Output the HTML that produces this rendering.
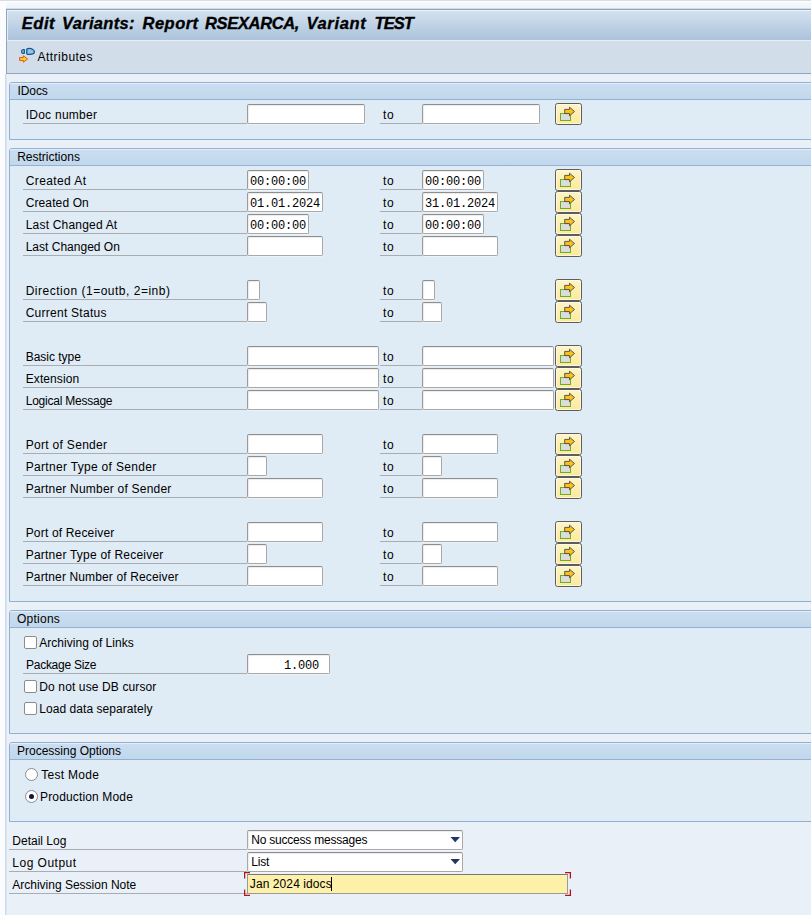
<!DOCTYPE html>
<html lang="en"><head><meta charset="utf-8"><title>Edit Variants: Report RSEXARCA, Variant TEST</title>
<style>
html,body{margin:0;padding:0}
body{width:811px;height:915px;position:relative;overflow:hidden;background:#e9f0f7;font:12px "Liberation Sans", sans-serif;color:#000}
div{box-sizing:border-box}
.abs,.t,.ul,.in,.mb,.cb,.rb,.gb,.dd{position:absolute}
.t{white-space:pre;line-height:22px;height:22px;color:#000}
.tt{font:italic bold 16.5px/22px "Liberation Sans", sans-serif;-webkit-text-stroke:0.35px #000}
.ul{height:1px;background:#a9adb3}
.in{height:20px;background:#fff;border:1px solid #a8a8a8;border-top-color:#8e8e8e;border-left-color:#999;border-radius:2px;font:12px "Liberation Mono", monospace;letter-spacing:-0.2px;line-height:18px;padding:2px 0 0 2px;white-space:pre;box-shadow:0 1px 0 #eef3f8, inset 1px 1px 1px #ebebeb;color:#000;overflow:hidden}
.mb{width:27px;height:22px;border:1px solid #5c5c63;border-radius:2.500px;background:linear-gradient(#fdf4c8,#fde99b);box-shadow:inset 0 0 0 1px rgba(255,252,232,.7)}
.mb svg{position:absolute;left:-1px;top:-1px}
.cb{width:13px;height:13px;background:#fff;border:1px solid #8c8c8c;border-radius:2px}
.rb{width:13px;height:13px;background:#fff;border:1px solid #8c8c8c;border-radius:50%}
.rb i{position:absolute;left:3px;top:3px;width:5px;height:5px;border-radius:50%;background:#15153f}
.gb{left:9px;width:820px;border:1px solid #8fb0d2;border-radius:3px 0 0 0;background:#dfebf5}
.gh{position:absolute;left:0;top:0;right:0;height:17px;border-top:1px solid #e6eff8;border-bottom:1px solid #94b1d1;background:linear-gradient(#cbdef0,#c1d7ec);border-radius:2px 0 0 0}
.dd{height:20px;background:#fff;border:1px solid #a8a8a8;border-top-color:#8e8e8e;border-radius:2px;box-shadow:0 1px 0 #f2f6fa, inset 1px 1px 1px #ebebeb}
</style></head><body>


<!-- outer frame -->
<div class="abs" style="left:0;top:0;width:811px;height:9px;background:linear-gradient(#fafbfd,#eef2f8)"></div>
<div class="abs" style="left:0;top:1px;width:811px;height:1px;background:#fdfdfe"></div>
<div class="abs" style="left:6px;top:8px;width:805px;height:1px;background:#d3dbe7"></div>
<div class="abs" style="left:0;top:0;width:6px;height:915px;background:#fbfcfd"></div>
<div class="abs" style="left:0;top:0;width:811px;height:1px;background:#d8dde5"></div>
<div class="abs" style="left:5px;top:74px;width:1px;height:841px;background:#cdd8e6"></div>
<div class="abs" style="left:6px;top:74px;width:1px;height:841px;background:#e0e8f1"></div>
<!-- title -->
<div class="abs" style="left:6px;top:9px;width:820px;height:65px;border:1px solid #8fa4be;background:#d1dee9"></div>
<div class="abs" style="left:7px;top:10px;width:820px;height:30px;border-top:1px solid #eaf1f8;border-left:1px solid #e3ecf5;background:linear-gradient(#d3e1ee,#abc3dc)"></div>
<div class="abs" style="left:7px;top:40px;width:820px;height:1px;background:#e6eef6"></div>
<div class="gb" style="top:82px;height:58px"><div class="gh"></div></div><div class="gb" style="top:148px;height:454px"><div class="gh"></div></div><div class="gb" style="top:610px;height:124px"><div class="gh"></div></div><div class="gb" style="top:742px;height:80px"><div class="gh"></div></div>
<div class="ul" style="left:23px;top:123px;width:224px"></div><div class="ul" style="left:380px;top:123px;width:42px"></div><div class="ul" style="left:23px;top:189px;width:224px"></div><div class="ul" style="left:380px;top:189px;width:42px"></div><div class="ul" style="left:23px;top:211px;width:224px"></div><div class="ul" style="left:380px;top:211px;width:42px"></div><div class="ul" style="left:23px;top:233px;width:224px"></div><div class="ul" style="left:380px;top:233px;width:42px"></div><div class="ul" style="left:23px;top:255px;width:224px"></div><div class="ul" style="left:380px;top:255px;width:42px"></div><div class="ul" style="left:23px;top:299px;width:224px"></div><div class="ul" style="left:380px;top:299px;width:42px"></div><div class="ul" style="left:23px;top:321px;width:224px"></div><div class="ul" style="left:380px;top:321px;width:42px"></div><div class="ul" style="left:23px;top:365px;width:224px"></div><div class="ul" style="left:380px;top:365px;width:42px"></div><div class="ul" style="left:23px;top:387px;width:224px"></div><div class="ul" style="left:380px;top:387px;width:42px"></div><div class="ul" style="left:23px;top:409px;width:224px"></div><div class="ul" style="left:380px;top:409px;width:42px"></div><div class="ul" style="left:23px;top:453px;width:224px"></div><div class="ul" style="left:380px;top:453px;width:42px"></div><div class="ul" style="left:23px;top:475px;width:224px"></div><div class="ul" style="left:380px;top:475px;width:42px"></div><div class="ul" style="left:23px;top:497px;width:224px"></div><div class="ul" style="left:380px;top:497px;width:42px"></div><div class="ul" style="left:23px;top:541px;width:224px"></div><div class="ul" style="left:380px;top:541px;width:42px"></div><div class="ul" style="left:23px;top:563px;width:224px"></div><div class="ul" style="left:380px;top:563px;width:42px"></div><div class="ul" style="left:23px;top:585px;width:224px"></div><div class="ul" style="left:380px;top:585px;width:42px"></div><div class="ul" style="left:23px;top:673px;width:224px"></div><div class="ul" style="left:9px;top:849px;width:238px"></div><div class="ul" style="left:9px;top:871px;width:238px"></div><div class="ul" style="left:9px;top:893px;width:238px"></div>
<div class="in" style="left:247px;top:104px;width:118px"></div><div class="in" style="left:422px;top:104px;width:118px"></div><div class="in" style="left:247px;top:170px;width:62px">00:00:00</div><div class="in" style="left:422px;top:170px;width:62px">00:00:00</div><div class="in" style="left:247px;top:192px;width:76px">01.01.2024</div><div class="in" style="left:422px;top:192px;width:76px">31.01.2024</div><div class="in" style="left:247px;top:214px;width:62px">00:00:00</div><div class="in" style="left:422px;top:214px;width:62px">00:00:00</div><div class="in" style="left:247px;top:236px;width:76px"></div><div class="in" style="left:422px;top:236px;width:76px"></div><div class="in" style="left:247px;top:280px;width:13px"></div><div class="in" style="left:422px;top:280px;width:13px"></div><div class="in" style="left:247px;top:302px;width:20px"></div><div class="in" style="left:422px;top:302px;width:20px"></div><div class="in" style="left:247px;top:346px;width:132px"></div><div class="in" style="left:422px;top:346px;width:132px"></div><div class="in" style="left:247px;top:368px;width:132px"></div><div class="in" style="left:422px;top:368px;width:132px"></div><div class="in" style="left:247px;top:390px;width:132px"></div><div class="in" style="left:422px;top:390px;width:132px"></div><div class="in" style="left:247px;top:434px;width:76px"></div><div class="in" style="left:422px;top:434px;width:76px"></div><div class="in" style="left:247px;top:456px;width:20px"></div><div class="in" style="left:422px;top:456px;width:20px"></div><div class="in" style="left:247px;top:478px;width:76px"></div><div class="in" style="left:422px;top:478px;width:76px"></div><div class="in" style="left:247px;top:522px;width:76px"></div><div class="in" style="left:422px;top:522px;width:76px"></div><div class="in" style="left:247px;top:544px;width:20px"></div><div class="in" style="left:422px;top:544px;width:20px"></div><div class="in" style="left:247px;top:566px;width:76px"></div><div class="in" style="left:422px;top:566px;width:76px"></div><div class="in" style="left:247px;top:654px;width:83px;text-align:right;padding-right:10px">1.000</div>
<div class="mb" style="left:555px;top:103px"><svg width="27" height="22" viewBox="0 0 27 22"><rect x="5.5" y="10.5" width="10" height="7" fill="#dcdcdc" stroke="#6ab023"/><path d="M9.700 6.400h4.800v-2.200l5 4.300-5 4.300v-2.200h-4.800z" fill="#fdbf12" stroke="#4a4a52" stroke-width=".9" stroke-linejoin="round"/></svg></div><div class="mb" style="left:555px;top:169px"><svg width="27" height="22" viewBox="0 0 27 22"><rect x="5.5" y="10.5" width="10" height="7" fill="#dcdcdc" stroke="#6ab023"/><path d="M9.700 6.400h4.800v-2.200l5 4.300-5 4.300v-2.200h-4.800z" fill="#fdbf12" stroke="#4a4a52" stroke-width=".9" stroke-linejoin="round"/></svg></div><div class="mb" style="left:555px;top:191px"><svg width="27" height="22" viewBox="0 0 27 22"><rect x="5.5" y="10.5" width="10" height="7" fill="#dcdcdc" stroke="#6ab023"/><path d="M9.700 6.400h4.800v-2.200l5 4.300-5 4.300v-2.200h-4.800z" fill="#fdbf12" stroke="#4a4a52" stroke-width=".9" stroke-linejoin="round"/></svg></div><div class="mb" style="left:555px;top:213px"><svg width="27" height="22" viewBox="0 0 27 22"><rect x="5.5" y="10.5" width="10" height="7" fill="#dcdcdc" stroke="#6ab023"/><path d="M9.700 6.400h4.800v-2.200l5 4.300-5 4.300v-2.200h-4.800z" fill="#fdbf12" stroke="#4a4a52" stroke-width=".9" stroke-linejoin="round"/></svg></div><div class="mb" style="left:555px;top:235px"><svg width="27" height="22" viewBox="0 0 27 22"><rect x="5.5" y="10.5" width="10" height="7" fill="#dcdcdc" stroke="#6ab023"/><path d="M9.700 6.400h4.800v-2.200l5 4.300-5 4.300v-2.200h-4.800z" fill="#fdbf12" stroke="#4a4a52" stroke-width=".9" stroke-linejoin="round"/></svg></div><div class="mb" style="left:555px;top:279px"><svg width="27" height="22" viewBox="0 0 27 22"><rect x="5.5" y="10.5" width="10" height="7" fill="#dcdcdc" stroke="#6ab023"/><path d="M9.700 6.400h4.800v-2.200l5 4.300-5 4.300v-2.200h-4.800z" fill="#fdbf12" stroke="#4a4a52" stroke-width=".9" stroke-linejoin="round"/></svg></div><div class="mb" style="left:555px;top:301px"><svg width="27" height="22" viewBox="0 0 27 22"><rect x="5.5" y="10.5" width="10" height="7" fill="#dcdcdc" stroke="#6ab023"/><path d="M9.700 6.400h4.800v-2.200l5 4.300-5 4.300v-2.200h-4.800z" fill="#fdbf12" stroke="#4a4a52" stroke-width=".9" stroke-linejoin="round"/></svg></div><div class="mb" style="left:555px;top:345px"><svg width="27" height="22" viewBox="0 0 27 22"><rect x="5.5" y="10.5" width="10" height="7" fill="#dcdcdc" stroke="#6ab023"/><path d="M9.700 6.400h4.800v-2.200l5 4.300-5 4.300v-2.200h-4.800z" fill="#fdbf12" stroke="#4a4a52" stroke-width=".9" stroke-linejoin="round"/></svg></div><div class="mb" style="left:555px;top:367px"><svg width="27" height="22" viewBox="0 0 27 22"><rect x="5.5" y="10.5" width="10" height="7" fill="#dcdcdc" stroke="#6ab023"/><path d="M9.700 6.400h4.800v-2.200l5 4.300-5 4.300v-2.200h-4.800z" fill="#fdbf12" stroke="#4a4a52" stroke-width=".9" stroke-linejoin="round"/></svg></div><div class="mb" style="left:555px;top:389px"><svg width="27" height="22" viewBox="0 0 27 22"><rect x="5.5" y="10.5" width="10" height="7" fill="#dcdcdc" stroke="#6ab023"/><path d="M9.700 6.400h4.800v-2.200l5 4.300-5 4.300v-2.200h-4.800z" fill="#fdbf12" stroke="#4a4a52" stroke-width=".9" stroke-linejoin="round"/></svg></div><div class="mb" style="left:555px;top:433px"><svg width="27" height="22" viewBox="0 0 27 22"><rect x="5.5" y="10.5" width="10" height="7" fill="#dcdcdc" stroke="#6ab023"/><path d="M9.700 6.400h4.800v-2.200l5 4.300-5 4.300v-2.200h-4.800z" fill="#fdbf12" stroke="#4a4a52" stroke-width=".9" stroke-linejoin="round"/></svg></div><div class="mb" style="left:555px;top:455px"><svg width="27" height="22" viewBox="0 0 27 22"><rect x="5.5" y="10.5" width="10" height="7" fill="#dcdcdc" stroke="#6ab023"/><path d="M9.700 6.400h4.800v-2.200l5 4.300-5 4.300v-2.200h-4.800z" fill="#fdbf12" stroke="#4a4a52" stroke-width=".9" stroke-linejoin="round"/></svg></div><div class="mb" style="left:555px;top:477px"><svg width="27" height="22" viewBox="0 0 27 22"><rect x="5.5" y="10.5" width="10" height="7" fill="#dcdcdc" stroke="#6ab023"/><path d="M9.700 6.400h4.800v-2.200l5 4.300-5 4.300v-2.200h-4.800z" fill="#fdbf12" stroke="#4a4a52" stroke-width=".9" stroke-linejoin="round"/></svg></div><div class="mb" style="left:555px;top:521px"><svg width="27" height="22" viewBox="0 0 27 22"><rect x="5.5" y="10.5" width="10" height="7" fill="#dcdcdc" stroke="#6ab023"/><path d="M9.700 6.400h4.800v-2.200l5 4.300-5 4.300v-2.200h-4.800z" fill="#fdbf12" stroke="#4a4a52" stroke-width=".9" stroke-linejoin="round"/></svg></div><div class="mb" style="left:555px;top:543px"><svg width="27" height="22" viewBox="0 0 27 22"><rect x="5.5" y="10.5" width="10" height="7" fill="#dcdcdc" stroke="#6ab023"/><path d="M9.700 6.400h4.800v-2.200l5 4.300-5 4.300v-2.200h-4.800z" fill="#fdbf12" stroke="#4a4a52" stroke-width=".9" stroke-linejoin="round"/></svg></div><div class="mb" style="left:555px;top:565px"><svg width="27" height="22" viewBox="0 0 27 22"><rect x="5.5" y="10.5" width="10" height="7" fill="#dcdcdc" stroke="#6ab023"/><path d="M9.700 6.400h4.800v-2.200l5 4.300-5 4.300v-2.200h-4.800z" fill="#fdbf12" stroke="#4a4a52" stroke-width=".9" stroke-linejoin="round"/></svg></div>
<div class="cb" style="left:24px;top:636px"></div><div class="cb" style="left:24px;top:680px"></div><div class="cb" style="left:24px;top:702px"></div>
<div class="rb" style="left:25px;top:768px"></div><div class="rb" style="left:25px;top:790px"><i></i></div>
<!-- dropdowns -->
<div class="dd" style="left:247px;top:830px;width:216px"></div>
<div class="dd" style="left:247px;top:852px;width:216px"></div>
<svg class="abs" style="left:450px;top:837px" width="10" height="6"><path d="M0.500 0h9.500L5.200 5.200z" fill="#1f3566"/></svg>
<svg class="abs" style="left:450px;top:859px" width="10" height="6"><path d="M0.500 0h9.500L5.200 5.200z" fill="#1f3566"/></svg>
<!-- focused input -->
<div class="abs" style="left:247px;top:874px;width:321px;height:20px;background:#fdf0a8;border:1px solid #9a9a9a;border-top-color:#777"></div>
<svg class="abs" style="left:244px;top:872px" width="328" height="25" fill="none" stroke="#b3151b" stroke-width="1.300"><path d="M6 0.600h-5.400v6M0.600 17.400v6h5.400M321 0.600h5.400v6M326.400 17.400v6h-5.400"/></svg>
<div class="abs" style="left:331px;top:877px;width:1px;height:14px;background:#000"></div>
<!-- toolbar icon -->
<svg class="abs" style="left:18px;top:46px" width="20" height="18" viewBox="0 0 20 18">
<path d="M6.300 3.600H5.300C3 3.600 3 7.300 5.300 7.300H6.300Z" fill="#b5cee8" stroke="#0b5a94" stroke-width="1.300" stroke-linejoin="round"/>
<path d="M8.800 3C10 2.400 13 2.400 14.500 3.300C16 4.200 16.600 5.200 16.400 6.200C16.100 7.600 14 8.300 12 8.300H9.600C9.100 8.300 8.800 8 8.800 7.500Z" fill="#9fbfe1" stroke="#0b5a94" stroke-width="1.300" stroke-linejoin="round"/>
<path d="M1.600 11.600H5.300V9.800L9.500 13L5.300 16.200V14.400H1.600Z" fill="#fdd324" stroke="#e8530c" stroke-width="1" stroke-linejoin="miter"/>
</svg>
<div class="t" style="left:25.7px;top:104.0px;letter-spacing:0.254px;">IDoc number</div><div class="t" style="left:383.0px;top:104.0px;letter-spacing:0.642px;">to</div><div class="t" style="left:25.7px;top:170.0px;letter-spacing:0.400px;">Created At</div><div class="t" style="left:383.0px;top:170.0px;letter-spacing:0.642px;">to</div><div class="t" style="left:25.7px;top:192.0px;letter-spacing:0.115px;">Created On</div><div class="t" style="left:383.0px;top:192.0px;letter-spacing:0.642px;">to</div><div class="t" style="left:25.7px;top:214.0px;letter-spacing:0.198px;">Last Changed At</div><div class="t" style="left:383.0px;top:214.0px;letter-spacing:0.642px;">to</div><div class="t" style="left:25.7px;top:236.0px;letter-spacing:0.008px;">Last Changed On</div><div class="t" style="left:383.0px;top:236.0px;letter-spacing:0.642px;">to</div><div class="t" style="left:25.7px;top:280.0px;letter-spacing:0.509px;">Direction (1=outb, 2=inb)</div><div class="t" style="left:383.0px;top:280.0px;letter-spacing:0.642px;">to</div><div class="t" style="left:25.7px;top:302.0px;letter-spacing:0.259px;">Current Status</div><div class="t" style="left:383.0px;top:302.0px;letter-spacing:0.642px;">to</div><div class="t" style="left:25.7px;top:346.0px;letter-spacing:-0.026px;">Basic type</div><div class="t" style="left:383.0px;top:346.0px;letter-spacing:0.642px;">to</div><div class="t" style="left:25.7px;top:368.0px;letter-spacing:0.100px;">Extension</div><div class="t" style="left:383.0px;top:368.0px;letter-spacing:0.642px;">to</div><div class="t" style="left:25.7px;top:390.0px;letter-spacing:-0.231px;">Logical Message</div><div class="t" style="left:383.0px;top:390.0px;letter-spacing:0.642px;">to</div><div class="t" style="left:25.7px;top:434.0px;letter-spacing:0.308px;">Port of Sender</div><div class="t" style="left:383.0px;top:434.0px;letter-spacing:0.642px;">to</div><div class="t" style="left:25.7px;top:456.0px;letter-spacing:0.315px;">Partner Type of Sender</div><div class="t" style="left:383.0px;top:456.0px;letter-spacing:0.642px;">to</div><div class="t" style="left:25.7px;top:478.0px;letter-spacing:0.215px;">Partner Number of Sender</div><div class="t" style="left:383.0px;top:478.0px;letter-spacing:0.642px;">to</div><div class="t" style="left:25.7px;top:522.0px;letter-spacing:0.172px;">Port of Receiver</div><div class="t" style="left:383.0px;top:522.0px;letter-spacing:0.642px;">to</div><div class="t" style="left:25.7px;top:544.0px;letter-spacing:0.224px;">Partner Type of Receiver</div><div class="t" style="left:383.0px;top:544.0px;letter-spacing:0.642px;">to</div><div class="t" style="left:25.7px;top:566.0px;letter-spacing:0.139px;">Partner Number of Receiver</div><div class="t" style="left:383.0px;top:566.0px;letter-spacing:0.642px;">to</div><div class="t" style="left:39.3px;top:632.0px;letter-spacing:0.020px;">Archiving of Links</div><div class="t" style="left:26.0px;top:654.0px;letter-spacing:-0.266px;">Package Size</div><div class="t" style="left:39.3px;top:676.0px;letter-spacing:0.124px;">Do not use DB cursor</div><div class="t" style="left:39.3px;top:698.0px;letter-spacing:0.055px;">Load data separately</div><div class="t" style="left:41.2px;top:764.0px;letter-spacing:0.293px;">Test Mode</div><div class="t" style="left:40.0px;top:786.0px;letter-spacing:0.151px;">Production Mode</div><div class="t" style="left:12.3px;top:830.0px;letter-spacing:0.005px;">Detail Log</div><div class="t" style="left:12.3px;top:852.0px;letter-spacing:0.491px;">Log Output</div><div class="t" style="left:12.3px;top:874.0px;letter-spacing:-0.007px;">Archiving Session Note</div><div class="t" style="left:17.5px;top:79.5px;letter-spacing:-0.077px;">IDocs</div><div class="t" style="left:17.2px;top:145.5px;letter-spacing:0.001px;">Restrictions</div><div class="t" style="left:17.0px;top:607.5px;letter-spacing:0.249px;">Options</div><div class="t" style="left:17.0px;top:739.5px;letter-spacing:-0.003px;">Processing Options</div><div class="t" style="left:37.5px;top:45.5px;letter-spacing:0.480px;">Attributes</div><div class="t" style="left:251.3px;top:829.0px;letter-spacing:-0.218px;">No success messages</div><div class="t" style="left:251.3px;top:851.0px;letter-spacing:-0.247px;">List</div><div class="t" style="left:249.8px;top:873.0px;letter-spacing:0.090px;">Jan 2024 idocs</div><div class="t tt" style="left:21.8px;top:12.0px;letter-spacing:0.545px;">Edit</div><div class="t tt" style="left:62.0px;top:12.0px;letter-spacing:0.317px;">Variants:</div><div class="t tt" style="left:142.5px;top:12.0px;letter-spacing:0.488px;">Report</div><div class="t tt" style="left:205.0px;top:12.0px;letter-spacing:-0.343px;">RSEXARCA,</div><div class="t tt" style="left:306.5px;top:12.0px;letter-spacing:0.639px;">Variant</div><div class="t tt" style="left:374.6px;top:12.0px;letter-spacing:-0.943px;">TEST</div>
</body></html>
